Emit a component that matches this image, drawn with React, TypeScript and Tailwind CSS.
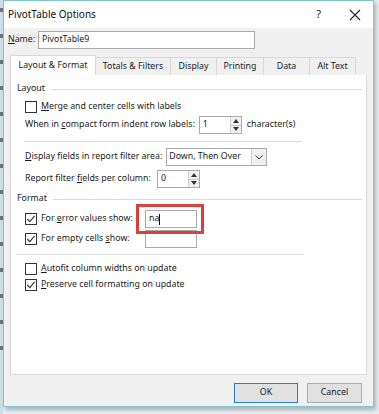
import React from 'react';

const font = { fontFamily: '"Noto Sans", "Open Sans", Arial, sans-serif' };

function Check({ checked }: { checked?: boolean }) {
  return (
    <span className="w-[12px] h-[12px] border border-[#333] bg-white flex items-center justify-center shrink-0">
      {checked && (
        <svg width="10" height="10" viewBox="0 0 10 10">
          <path d="M1.3 5 L3.8 7.6 L8.7 1.8" fill="none" stroke="#333" strokeWidth="1.1" />
        </svg>
      )}
    </span>
  );
}

function Spinner() {
  return (
    <div className="w-[11px] h-full flex flex-col border-l border-[#ccc] bg-[#f0f0f0]">
      <div className="flex-1 flex items-center justify-center border-b border-[#ccc]">
        <svg width="6" height="4" viewBox="0 0 6 4"><path d="M0 4 L3 0 L6 4Z" fill="#333" /></svg>
      </div>
      <div className="flex-1 flex items-center justify-center">
        <svg width="6" height="4" viewBox="0 0 6 4"><path d="M0 0 L3 4 L6 0Z" fill="#333" /></svg>
      </div>
    </div>
  );
}

function U({ children }: { children: React.ReactNode }) {
  return <span className="underline underline-offset-1">{children}</span>;
}

function Section({ title }: { title: string }) {
  return (
    <div className="flex items-center gap-[6px] h-[16px]">
      <span>{title}</span>
      <div className="flex-1 h-px bg-[#dcdcdc]" />
    </div>
  );
}

export default function App() {
  const tabs = ['Totals & Filters', 'Display', 'Printing', 'Data', 'Alt Text'];
  const tabW = ['w-[75px]', 'w-[46px]', 'w-[47px]', 'w-[46px]', 'w-[46px]'];
  return (
    <div className="w-[379px] h-[414px] flex bg-[#e9eef2] text-[8.8px] text-[#1a1a1a] overflow-hidden whitespace-nowrap" style={font}>
      <div className="w-[3px] h-full bg-[#cddfe8] flex flex-col gap-[22px] pt-[8px]">
        {Array.from({ length: 14 }).map((_, i) => (
          <div key={i} className="w-[3px] h-[4px] bg-[#6b7480]" />
        ))}
      </div>
      <div className="w-[371px] h-[407px] border border-[#7fc6cf] bg-[#f0f0f0] flex flex-col shadow-[2px_3px_4px_rgba(0,0,0,0.25)]">
        {/* title bar */}
        <div className="h-[27px] bg-white flex items-center pl-[4px] pr-[12px]">
          <span className="text-[10px] text-[#111]">PivotTable Options</span>
          <span className="ml-auto mr-[28px] text-[11px]">?</span>
          <svg width="12" height="12" viewBox="0 0 12 12">
            <path d="M1 1 L11 11 M11 1 L1 11" stroke="#222" strokeWidth="1.1" />
          </svg>
        </div>
        {/* name */}
        <div className="flex items-center mt-[3px] pl-[4px] h-[18px]">
          <span className="w-[30px]"><U>N</U>ame:</span>
          <div className="w-[217px] h-[18px] border border-[#aaa] bg-white flex items-center pl-[3px]">PivotTable9</div>
        </div>
        {/* tabs */}
        <div className="flex items-end mt-[6px] pl-[6px] h-[20px]">
          <div className="w-[86px] h-[20px] bg-white border border-b-0 border-[#d9d9d9] flex items-center justify-center">Layout &amp; Format</div>
          {tabs.map((t, i) => (
            <div key={t} className={`${tabW[i]} h-[18px] bg-[#f0f0f0] border border-l-0 border-b-0 border-[#d9d9d9] flex items-center justify-center`}>{t}</div>
          ))}
        </div>
        <div className="mx-[6px] h-[300px] bg-white border border-[#d9d9d9] border-t-0 flex flex-col pl-[6px] pr-[4px] pt-[6px]">
          <Section title="Layout" />
          <div className="pl-[8px] flex flex-col">
            <div className="flex items-center gap-[4px] h-[16px] mt-[2px]">
              <Check />
              <span><U>M</U>erge and center cells with labels</span>
            </div>
            <div className="flex items-center h-[18px] mt-[1px]">
              <span>When in <U>c</U>ompact form indent row labels:</span>
              <div className="ml-[4px] w-[43px] h-[18px] border border-[#aaa] flex items-center">
                <span className="flex-1 pl-[3px]">1</span>
                <Spinner />
              </div>
              <span className="ml-[5px]">character(s)</span>
            </div>
          </div>
          <div className="ml-[7px] w-[278px] h-px bg-[#dcdcdc] mt-[7px]" />
          <div className="pl-[8px] flex flex-col">
            <div className="flex items-center h-[18px] mt-[6px]">
              <span><U>D</U>isplay fields in report filter area:</span>
              <div className="ml-[4px] w-[101px] h-[18px] border border-[#aaa] flex items-center">
                <span className="flex-1 pl-[2px]">Down, Then Over</span>
                <div className="w-[15px] h-full border-l border-[#ccc] bg-[#f0f0f0] flex items-center justify-center">
                  <svg width="8" height="5" viewBox="0 0 8 5"><path d="M0.5 0.5 L4 4 L7.5 0.5" fill="none" stroke="#444" strokeWidth="1" /></svg>
                </div>
              </div>
            </div>
            <div className="flex items-center h-[18px] mt-[4px]">
              <span>Report filter <U>f</U>ields per column:</span>
              <div className="ml-[6px] w-[43px] h-[18px] border border-[#aaa] flex items-center">
                <span className="flex-1 pl-[3px]">0</span>
                <Spinner />
              </div>
            </div>
          </div>
          <div className="mt-[3px]">
            <Section title="Format" />
          </div>
          <div className="pl-[8px] flex flex-col">
            <div className="flex items-center h-[20px] mt-[2px]">
              <Check checked />
              <span className="ml-[4px] w-[104px]">For <U>e</U>rror values show:</span>
              <div className="relative">
                <div className="w-[52px] h-[18px] border border-[#aaa] bg-white flex items-center pl-[3px]">
                  na<span className="w-px h-[11px] bg-black" />
                </div>
                <div className="absolute -left-[9px] -top-[6px] w-[68px] h-[30px] border-[3px] border-[#d9403c]" />
              </div>
            </div>
            <div className="flex items-center h-[20px]">
              <Check checked />
              <span className="ml-[4px] w-[104px]">For empty cells <U>s</U>how:</span>
              <div className="w-[52px] h-[18px] border border-[#aaa] bg-white" />
            </div>
          </div>
          <div className="w-[286px] h-px bg-[#dcdcdc] mt-[5px]" />
          <div className="pl-[8px] flex flex-col mt-[6px]">
            <div className="flex items-center gap-[4px] h-[16px]">
              <Check />
              <span><U>A</U>utofit column widths on update</span>
            </div>
            <div className="flex items-center gap-[4px] h-[16px]">
              <Check checked />
              <span><U>P</U>reserve cell formatting on update</span>
            </div>
          </div>
        </div>
        {/* buttons */}
        <div className="flex justify-end gap-[9px] pr-[11px] mt-[8px]">
          <div className="w-[64px] h-[20px] bg-[#e1e1e1] border border-[#2b7bd4] flex items-center justify-center">OK</div>
          <div className="w-[55px] h-[20px] bg-[#e1e1e1] border border-[#adadad] flex items-center justify-center">Cancel</div>
        </div>
      </div>
    </div>
  );
}
